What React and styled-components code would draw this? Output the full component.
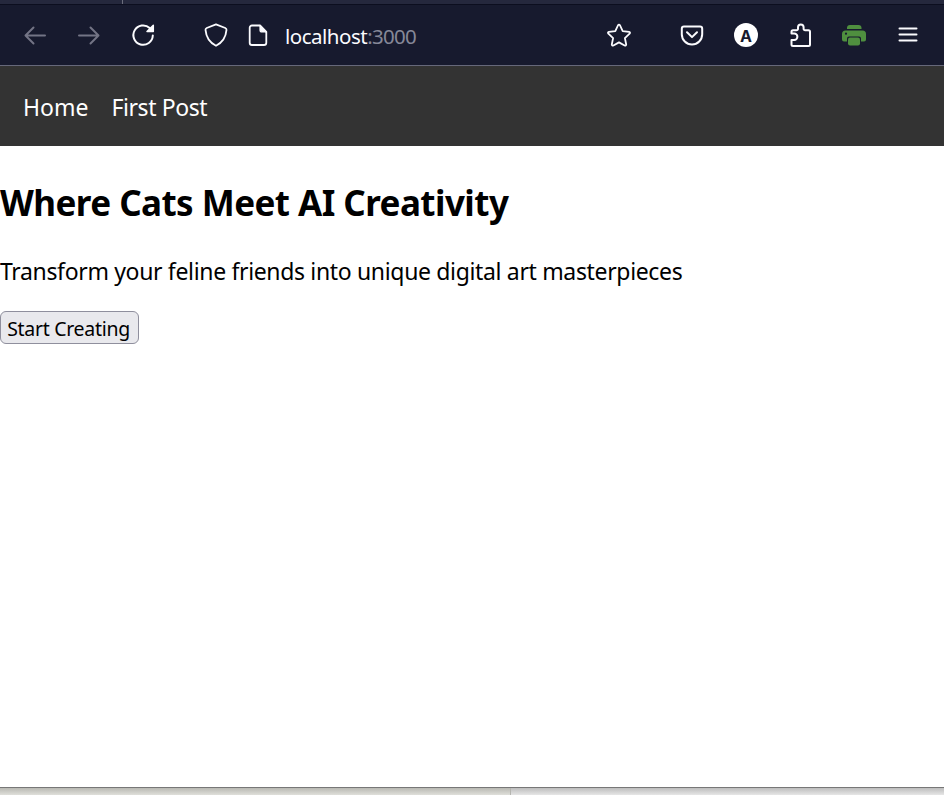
import React from "react";
import styled, { createGlobalStyle } from "styled-components";

const GlobalStyle = createGlobalStyle`
  * { box-sizing: border-box; }
  html, body { margin: 0; padding: 0; }
  body {
    background: #fff;
    color: #000;
    font-family: "Noto Sans", "Open Sans", sans-serif;
    overflow: hidden;
  }
`;

const Window = styled.div`
  display: flex;
  flex-direction: column;
  width: 944px;
  height: 795px;
`;

const TabStrip = styled.div`
  display: flex;
  flex: none;
  height: 4px;
  background: #25283d;
`;

const TabEdge = styled.div`
  width: 123px;
  border-right: 1px solid #6b6d7c;
`;

const Toolbar = styled.div`
  display: flex;
  flex: none;
  align-items: center;
  height: 62px;
  padding: 0 24px 0 23px;
  background: #171a2e;
  border-top: 1px solid #0c0e1f;
  border-bottom: 1px solid #66687a;
`;

const IconButton = styled.button`
  display: flex;
  flex: none;
  width: 24px;
  height: 24px;
  margin: 0 0 0 ${(p) => p.$gap || 0}px;
  padding: 0;
  border: 0;
  background: none;
  color: ${(p) => p.$color || "#fbfbfe"};
`;

const Icon = styled.svg`
  display: block;
  width: 24px;
  height: 24px;
  fill: none;
  stroke: currentColor;
  stroke-width: ${(p) => p.$weight || 1.8};
  stroke-linecap: round;
  stroke-linejoin: round;
`;

const AddressBar = styled.div`
  display: flex;
  flex: 1;
  align-items: center;
  margin-left: 49px;
`;

const Address = styled.div`
  flex: 1;
  margin-left: 15px;
  padding-top: 1px;
  font-size: 20.5px;
  line-height: 28px;
  letter-spacing: -0.5px;
  color: #fbfbfe;
  white-space: nowrap;
`;

const Port = styled.span`
  color: #868898;
  letter-spacing: -0.7px;
`;

const Avatar = styled.div`
  display: flex;
  flex: none;
  align-items: center;
  justify-content: center;
  width: 24px;
  height: 24px;
  margin-left: 30px;
  border-radius: 50%;
  background: #fff;
  color: #171a2e;
  font: 700 16px/24px Inter, sans-serif;
  padding-top: 1px;
`;

const Nav = styled.nav`
  display: flex;
  flex: none;
  align-items: center;
  gap: 23px;
  height: 80px;
  padding: 1px 23px 0;
  background: #333;
`;

const NavLink = styled.a`
  color: #fff;
  font-size: 23px;
  line-height: 32px;
  letter-spacing: ${(p) => p.$tracking || 0}px;
  text-decoration: none;
`;

const Main = styled.main`
  flex: 1;
  padding-top: 33px;
`;

const Title = styled.h1`
  margin: 0;
  font-size: 35px;
  line-height: 48px;
  font-weight: 700;
  letter-spacing: -0.55px;
  white-space: nowrap;
`;

const Lead = styled.p`
  margin: 28px 0 24px;
  font-size: 23px;
  line-height: 32px;
  letter-spacing: -0.34px;
  white-space: nowrap;
`;

const StartButton = styled.button`
  display: block;
  width: 139px;
  height: 33px;
  padding: 2px 2px 0 0;
  border: 1px solid #8f8f9d;
  border-radius: 6px;
  background: #e9e9ed;
  color: #000;
  font: 400 19.5px/28px "Noto Sans", "Open Sans", sans-serif;
  letter-spacing: -0.3px;
  white-space: nowrap;
`;

const Desktop = styled.div`
  display: flex;
  flex: none;
  height: 8px;
  border-top: 1px solid #777;
`;

const Backdrop = styled.div`
  width: ${(p) => p.$width};
  background: linear-gradient(${(p) => p.$from}, ${(p) => p.$to});
  border-right: ${(p) => (p.$edge ? "1px solid #b5b5b0" : "0")};
`;

export default function App() {
  return (
    <>
      <GlobalStyle />
      <Window>
        <TabStrip>
          <TabEdge />
        </TabStrip>
        <Toolbar>
          <IconButton aria-label="Back" $color="#737485">
            <Icon viewBox="0 0 24 24" $weight={2}>
              <path d="M22 12.500H2.500M10.500 4.500l-8 8 8 8" />
            </Icon>
          </IconButton>
          <IconButton aria-label="Forward" $gap={30} $color="#737485">
            <Icon viewBox="0 0 24 24" $weight={2}>
              <path d="M2 12.500h19.500M13.500 4.500l8 8-8 8" />
            </Icon>
          </IconButton>
          <IconButton aria-label="Reload" $gap={30}>
            <Icon viewBox="0 0 24 24" $weight={2}>
              <path d="M21.800 12.500A9.700 9.700 0 1 1 18.700 5" />
              <path d="M22.300 2.200v6.300h-6.300z" fill="currentColor" strokeWidth="1.500" />
            </Icon>
          </IconButton>
          <AddressBar>
            <IconButton aria-label="Tracking protection">
              <Icon viewBox="0 0 24 24">
                <path d="M12 1.300 21.300 5c.9.400 1.300 1 1.200 1.900C21.900 14 18.500 19.500 12 22.800 5.500 19.500 2.100 14 1.500 6.900 1.400 6 1.800 5.400 2.700 5z" />
              </Icon>
            </IconButton>
            <IconButton aria-label="Site information" $gap={18}>
              <Icon viewBox="0 0 24 24">
                <path d="M14 2.500H6A2.300 2.300 0 0 0 3.700 4.800v14.900A2.300 2.300 0 0 0 6 22h12a2.300 2.300 0 0 0 2.300-2.300V9z" />
                <path d="M14 2.500V7a2 2 0 0 0 2 2h4.300z" fill="currentColor" strokeWidth="1.200" />
              </Icon>
            </IconButton>
            <Address>
              localhost<Port>:3000</Port>
            </Address>
            <IconButton aria-label="Bookmark">
              <Icon viewBox="0 0 24 24">
                <path d="M10.900 2.500q1.100-1.700 2.200 0l2.600 5.700 6.400.7q1.500.500.500 1.800l-4.700 4.400 1.300 6.400q-.1 1.600-1.600 1L12 19.400l-5.600 3.100q-1.500.6-1.600-1l1.300-6.400-4.700-4.400q-1-1.300.5-1.800l6.400-.7z" />
              </Icon>
            </IconButton>
          </AddressBar>
          <IconButton aria-label="Pocket" $gap={49}>
            <Icon viewBox="0 0 24 24" $weight={2}>
              <path d="M4 3.500h16A2.200 2.200 0 0 1 22.200 5.700V11.300a10.200 10.200 0 0 1-20.400 0V5.700A2.200 2.200 0 0 1 4 3.500z" />
              <path d="M7 9.300l5 4.800 5-4.800" />
            </Icon>
          </IconButton>
          <Avatar>A</Avatar>
          <IconButton aria-label="Extensions" $gap={31}>
            <Icon viewBox="0 0 24 24" $weight={2}>
              <path d="M2.500 10.300V8.700A1.500 1.500 0 0 1 4 7.200h3.500a1.500 1.500 0 0 0 1.500-1.500V4.200a2.800 2.800 0 0 1 5.600 0v1.500a1.500 1.500 0 0 0 1.500 1.500h3.400A1.500 1.500 0 0 1 21 8.700v12.700A1.500 1.500 0 0 1 19.500 22.900H4a1.500 1.500 0 0 1-1.500-1.500V17h2.700a3.200 3.200 0 0 0 0-6.400H2.500z" />
            </Icon>
          </IconButton>
          <IconButton aria-label="Print" $gap={29} $color="#4f8f3f">
            <Icon viewBox="0 0 24 24">
              <g fill="currentColor" stroke="none">
                <path d="M5 6V5a3 3 0 0 1 3-3h8.500a3 3 0 0 1 3 3v1z" />
                <path fillRule="evenodd" d="M3.500 7.500h17A3.500 3.500 0 0 1 24 11v5.500a2 2 0 0 1-2 2h-3V15.500A2 2 0 0 0 17 13.500H7A2 2 0 0 0 5 15.500V18.500H2a2 2 0 0 1-2-2V11A3.500 3.500 0 0 1 3.500 7.500zM4 9.600a1.100 1.100 0 1 0 0 2.200 1.100 1.100 0 0 0 0-2.200z" />
                <rect x="6" y="14.500" width="12" height="8" rx="2" />
              </g>
            </Icon>
          </IconButton>
          <IconButton aria-label="Menu" $gap={30}>
            <Icon viewBox="0 0 24 24" $weight={2}>
              <path d="M3.500 5.500h17M3.500 11.500h17M3.500 17.500h17" />
            </Icon>
          </IconButton>
        </Toolbar>
        <Nav>
          <NavLink>Home</NavLink>
          <NavLink $tracking={-0.4}>First Post</NavLink>
        </Nav>
        <Main>
          <Title>Where Cats Meet AI Creativity</Title>
          <Lead>Transform your feline friends into unique digital art masterpieces</Lead>
          <StartButton>Start Creating</StartButton>
        </Main>
        <Desktop>
          <Backdrop $width="511px" $from="#b9b9b3" $to="#dfdfda" $edge />
          <Backdrop $width="433px" $from="#bdbdbd" $to="#e6e6e6" />
        </Desktop>
      </Window>
    </>
  );
}
